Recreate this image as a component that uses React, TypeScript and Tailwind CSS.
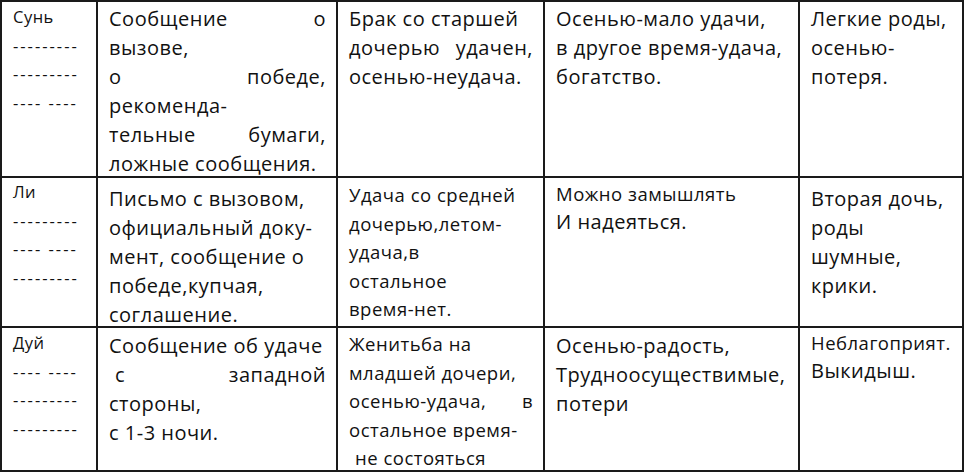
type Size = "lg" | "md" | "sm";

type Line = {
  text: string;
  justify?: boolean;
  indent?: boolean;
  inline?: boolean;
  dash?: boolean;
};

type Cell = {
  size: Size;
  pad: string;
  lines: Line[];
};

const sizeClass: Record<Size, string> = {
  lg: "text-[20px] leading-[29px] tracking-[0.5px]",
  md: "text-[18.5px] leading-[28.5px] tracking-[0.5px]",
  sm: "text-[16.5px] leading-[28.5px] tracking-[0.5px]",
};

// a smaller line sitting inside a cell of large text
const inlineSmall = "text-[18.5px] leading-[26px] tracking-[0.5px]";

const dashes = (a: string, b: string, c: string): Line[] => [
  { text: a, dash: true },
  { text: b, dash: true },
  { text: c, dash: true },
];

const rows: Cell[][] = [
  [
    {
      size: "sm",
      pad: "pt-[1px]",
      lines: [{ text: "Сунь" }, ...dashes("---------", "---------", "---- ----")],
    },
    {
      size: "lg",
      pad: "pt-[2px]",
      lines: [
        { text: "Сообщение о", justify: true },
        { text: "вызове," },
        { text: "о победе,", justify: true },
        { text: "рекоменда-" },
        { text: "тельные бумаги,", justify: true },
        { text: "ложные сообщения." },
      ],
    },
    {
      size: "lg",
      pad: "pt-[2px]",
      lines: [
        { text: "Брак со старшей" },
        { text: "дочерью удачен,", justify: true },
        { text: "осенью-неудача." },
      ],
    },
    {
      size: "lg",
      pad: "pt-[2px]",
      lines: [
        { text: "Осенью-мало удачи," },
        { text: "в другое время-удача," },
        { text: "богатство." },
      ],
    },
    {
      size: "lg",
      pad: "pt-[2px]",
      lines: [{ text: "Легкие роды," }, { text: "осенью-" }, { text: "потеря." }],
    },
  ],
  [
    {
      size: "sm",
      pad: "pt-[0px]",
      lines: [{ text: "Ли" }, ...dashes("---------", "---- ----", "---------")],
    },
    {
      size: "lg",
      pad: "pt-[6px]",
      lines: [
        { text: "Письмо с вызовом," },
        { text: "официальный доку-" },
        { text: "мент, сообщение о" },
        { text: "победе,купчая," },
        { text: "соглашение." },
      ],
    },
    {
      size: "md",
      pad: "pt-[3px]",
      lines: [
        { text: "Удача со средней" },
        { text: "дочерью,летом-" },
        { text: "удача,в" },
        { text: "остальное" },
        { text: "время-нет." },
      ],
    },
    {
      size: "lg",
      pad: "pt-[3px]",
      lines: [{ text: "Можно замышлять", inline: true }, { text: "И надеяться." }],
    },
    {
      size: "lg",
      pad: "pt-[6px]",
      lines: [
        { text: "Вторая дочь," },
        { text: "роды" },
        { text: "шумные," },
        { text: "крики." },
      ],
    },
  ],
  [
    {
      size: "sm",
      pad: "pt-[1px]",
      lines: [{ text: "Дуй" }, ...dashes("---- ----", "---------", "---------")],
    },
    {
      size: "lg",
      pad: "pt-[3px]",
      lines: [
        { text: "Сообщение об удаче" },
        { text: "с западной", justify: true, indent: true },
        { text: "стороны," },
        { text: "с 1-3 ночи." },
      ],
    },
    {
      size: "md",
      pad: "pt-[2px]",
      lines: [
        { text: "Женитьба на" },
        { text: "младшей дочери," },
        { text: "осенью-удача, в", justify: true },
        { text: "остальное время-" },
        { text: "не состояться", indent: true },
      ],
    },
    {
      size: "lg",
      pad: "pt-[3px]",
      lines: [
        { text: "Осенью-радость," },
        { text: "Трудноосуществимые," },
        { text: "потери" },
      ],
    },
    {
      size: "lg",
      pad: "pt-[2px]",
      lines: [{ text: "Неблагоприят.", inline: true }, { text: "Выкидыш." }],
    },
  ],
];

function TextLine({ line }: { line: Line }) {
  const extra = [
    line.inline ? inlineSmall : "",
    line.indent ? "pl-[6px]" : "",
    line.dash ? "tracking-[2px]" : "",
  ].join(" ");
  if (line.justify) {
    return (
      <div className={`flex justify-between whitespace-nowrap ${extra}`}>
        {line.text.split(" ").map((w, i) => (
          <span key={i}>{w}</span>
        ))}
      </div>
    );
  }
  return <div className={`whitespace-pre ${extra}`}>{line.text}</div>;
}

export default function App() {
  return (
    <div className="w-[965px] h-[473px] bg-white text-[#111] font-['Open_Sans','Liberation_Sans',sans-serif]">
      <div className="grid w-[964px] grid-cols-[96px_240px_207px_255px_164px] grid-rows-[176px_150px_144px] border-l-2 border-t-2 border-[#1a1a1a]">
        {rows.map((row, r) =>
          row.map((cell, c) => (
            <div
              key={`${r}-${c}`}
              className={`overflow-hidden border-r-2 border-b-2 border-[#1a1a1a] pl-[11px] pr-[10px] ${cell.pad} ${sizeClass[cell.size]}`}
            >
              {cell.lines.map((line, i) => (
                <TextLine key={i} line={line} />
              ))}
            </div>
          ))
        )}
      </div>
    </div>
  );
}
